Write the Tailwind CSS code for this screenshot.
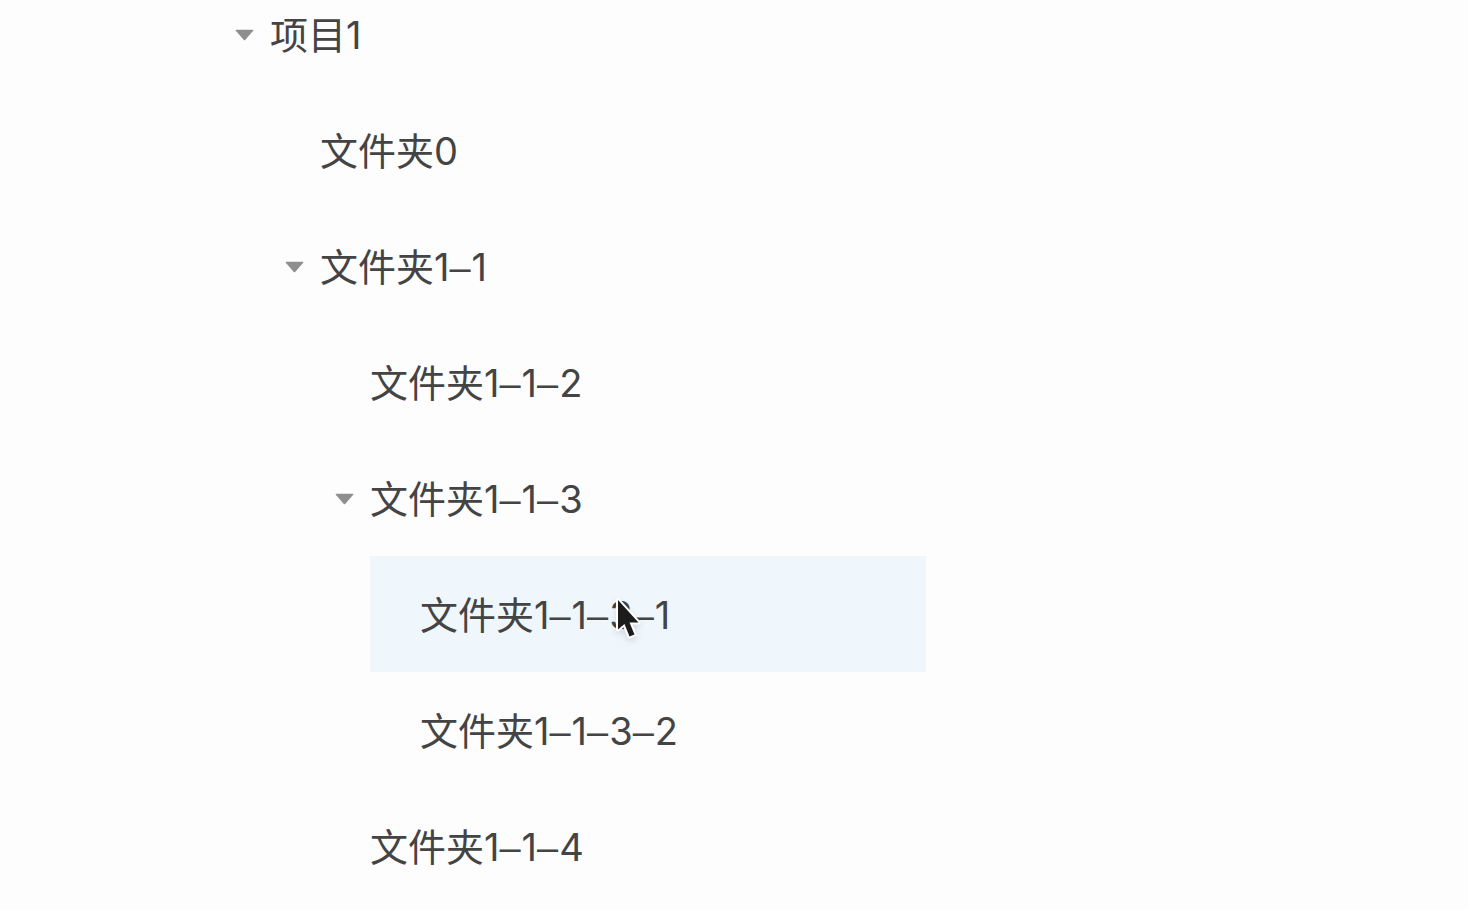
<!DOCTYPE html>
<html lang="zh-CN">
<head>
<meta charset="utf-8">
<meta name="viewport" content="width=device-width, initial-scale=1">
<title>项目1</title>
<script src="https://cdn.jsdelivr.net/npm/@tailwindcss/browser@4"></script>
</head>
<body class="min-h-screen overflow-x-hidden bg-[#fdfdfd] font-['Inter','Noto_Sans_CJK_SC',sans-serif] text-[38px] text-[#444444] [&_i]:mr-px [&_i]:font-['Liberation_Sans',sans-serif] [&_i]:leading-none [&_i]:not-italic">
<main class="-mt-6 ml-55 max-w-[706px]">
  <ul role="tree" aria-label="项目">
    <li role="treeitem" aria-expanded="true">
      <div class="flex h-29 items-center pt-0.5">
        <button type="button" aria-label="折叠 项目1" class="flex w-[50px] shrink-0 pl-[15px]"><svg class="h-3 w-[19px]" viewBox="0 0 19 12" fill="#8e8e8e"><path d="M1 .8h17q.7.2.2.9L10.400 10.700q-.9 1-1.800 0L.8 1.700Q.3 1 1 .8z"/></svg></button>
        <span class="whitespace-nowrap">项目1</span>
      </div>
      <ul role="group" class="pl-[50px]">
        <li role="treeitem"><div class="flex h-29 items-center pt-0.5 pl-[50px]"><span class="whitespace-nowrap">文件夹0</span></div></li>
        <li role="treeitem" aria-expanded="true">
          <div class="flex h-29 items-center pt-0.5">
            <button type="button" aria-label="折叠 文件夹1–1" class="flex w-[50px] shrink-0 pl-[15px]"><svg class="h-3 w-[19px]" viewBox="0 0 19 12" fill="#8e8e8e"><path d="M1 .8h17q.7.2.2.9L10.400 10.700q-.9 1-1.800 0L.8 1.700Q.3 1 1 .8z"/></svg></button>
            <span class="whitespace-nowrap">文件夹1<i>–</i>1</span>
          </div>
          <ul role="group" class="pl-[50px]">
            <li role="treeitem"><div class="flex h-29 items-center pt-0.5 pl-[50px]"><span class="whitespace-nowrap">文件夹1<i>–</i>1<i>–</i>2</span></div></li>
            <li role="treeitem" aria-expanded="true">
              <div class="flex h-29 items-center pt-0.5">
                <button type="button" aria-label="折叠 文件夹1–1–3" class="flex w-[50px] shrink-0 pl-[15px]"><svg class="h-3 w-[19px]" viewBox="0 0 19 12" fill="#8e8e8e"><path d="M1 .8h17q.7.2.2.9L10.400 10.700q-.9 1-1.800 0L.8 1.700Q.3 1 1 .8z"/></svg></button>
                <span class="whitespace-nowrap">文件夹1<i>–</i>1<i>–</i>3</span>
              </div>
              <ul role="group" class="pl-[50px]">
                <li role="treeitem" aria-selected="true">
                  <div class="relative flex h-29 items-center bg-[#eff6fc] pt-0.5 pl-[50px]">
                    <span class="whitespace-nowrap">文件夹1<i>–</i>1<i>–</i>3<i>–</i>1</span>
                    <!-- Mouse pointer over the row -->
                    <svg class="absolute top-[37px] left-[241px] h-13 w-10 drop-shadow-md" viewBox="0 0 40 52" aria-hidden="true"><path d="M7 7v29.500l6.500-5.500 5 12.500 5-2-5-12h9z" fill="#1c1c1c" stroke="#fff" stroke-width="4" stroke-linejoin="round" paint-order="stroke"/></svg>
                  </div>
                </li>
                <li role="treeitem"><div class="flex h-29 items-center pt-0.5 pl-[50px]"><span class="whitespace-nowrap">文件夹1<i>–</i>1<i>–</i>3<i>–</i>2</span></div></li>
              </ul>
            </li>
            <li role="treeitem"><div class="flex h-29 items-center pt-0.5 pl-[50px]"><span class="whitespace-nowrap">文件夹1<i>–</i>1<i>–</i>4</span></div></li>
          </ul>
        </li>
      </ul>
    </li>
  </ul>
</main>
</body>
</html>
